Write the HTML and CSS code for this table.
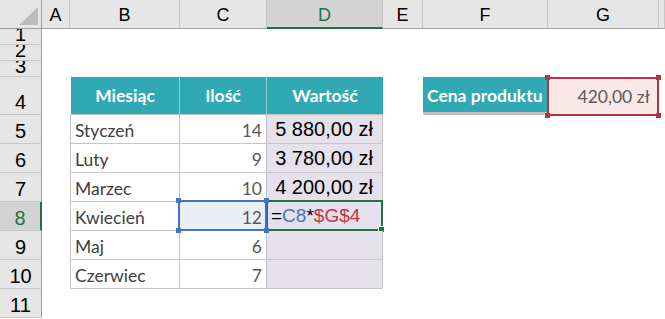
FILE: index.html
```html
<!DOCTYPE html>
<html lang="pl">
<head>
    <meta charset="UTF-8">
    <meta name="viewport" content="width=device-width, initial-scale=1.0">
    <title>Arkusz - Cena produktu</title>
    <link rel="stylesheet" href="styles.css">
</head>
<body>
    <div class="sheet">
        <!-- nagłówki kolumn -->
        <div class="row head">
            <div class="corner"></div>
            <div class="col">A</div>
            <div class="col">B</div>
            <div class="col">C</div>
            <div class="col active">D</div>
            <div class="col">E</div>
            <div class="col">F</div>
            <div class="col">G</div>
            <div class="col"></div>
        </div>

        <div class="row thin">
            <div class="num">1</div>
            <div class="cell"></div><div class="cell"></div><div class="cell"></div><div class="cell"></div>
            <div class="cell"></div><div class="cell"></div><div class="cell"></div><div class="cell"></div>
        </div>
        <div class="row thin">
            <div class="num">2</div>
            <div class="cell"></div><div class="cell"></div><div class="cell"></div><div class="cell"></div>
            <div class="cell"></div><div class="cell"></div><div class="cell"></div><div class="cell"></div>
        </div>
        <div class="row thin">
            <div class="num">3</div>
            <div class="cell"></div><div class="cell"></div><div class="cell"></div><div class="cell"></div>
            <div class="cell"></div><div class="cell"></div><div class="cell"></div><div class="cell"></div>
        </div>

        <!-- nagłówek tabeli i cena -->
        <div class="row tall">
            <div class="num">4</div>
            <div class="cell"></div>
            <div class="cell th first">Miesiąc</div>
            <div class="cell th">Ilość</div>
            <div class="cell th last">Wartość</div>
            <div class="cell"></div>
            <div class="cell label">Cena produktu</div>
            <div class="cell price">420,00 zł</div>
            <div class="cell"></div>
        </div>

        <div class="row">
            <div class="num">5</div>
            <div class="cell"></div>
            <div class="cell td month">Styczeń</div>
            <div class="cell td qty">14</div>
            <div class="cell td value">5 880,00 zł</div>
            <div class="cell"></div><div class="cell"></div><div class="cell"></div><div class="cell"></div>
        </div>
        <div class="row">
            <div class="num">6</div>
            <div class="cell"></div>
            <div class="cell td month">Luty</div>
            <div class="cell td qty">9</div>
            <div class="cell td value">3 780,00 zł</div>
            <div class="cell"></div><div class="cell"></div><div class="cell"></div><div class="cell"></div>
        </div>
        <div class="row">
            <div class="num">7</div>
            <div class="cell"></div>
            <div class="cell td month">Marzec</div>
            <div class="cell td qty">10</div>
            <div class="cell td value">4 200,00 zł</div>
            <div class="cell"></div><div class="cell"></div><div class="cell"></div><div class="cell"></div>
        </div>
        <div class="row">
            <div class="num active">8</div>
            <div class="cell"></div>
            <div class="cell td month">Kwiecień</div>
            <div class="cell td qty ref">12</div>
            <div class="cell td value edit"><span class="op">=</span><span class="r-blue">C8</span><span class="op">*</span><span class="r-red">$G$4</span></div>
            <div class="cell"></div><div class="cell"></div><div class="cell"></div><div class="cell"></div>
        </div>
        <div class="row">
            <div class="num">9</div>
            <div class="cell"></div>
            <div class="cell td month">Maj</div>
            <div class="cell td qty">6</div>
            <div class="cell td value"></div>
            <div class="cell"></div><div class="cell"></div><div class="cell"></div><div class="cell"></div>
        </div>
        <div class="row">
            <div class="num">10</div>
            <div class="cell"></div>
            <div class="cell td month">Czerwiec</div>
            <div class="cell td qty">7</div>
            <div class="cell td value"></div>
            <div class="cell"></div><div class="cell"></div><div class="cell"></div><div class="cell"></div>
        </div>
        <div class="row">
            <div class="num">11</div>
            <div class="cell"></div><div class="cell"></div><div class="cell"></div><div class="cell"></div>
            <div class="cell"></div><div class="cell"></div><div class="cell"></div><div class="cell"></div>
        </div>
    </div>
</body>
</html>
```

FILE: styles.css
```css
* {
    box-sizing: border-box;
}

body {
    margin: 0;
    padding: 0;
    background: #fff;
    overflow: hidden;
    font-family: "Liberation Sans", Arial, sans-serif;
}

.sheet {
    width: 665px;
    height: 319px;
    overflow: hidden;
}

.row {
    display: grid;
    grid-template-columns: 42px 28px 110px 87px 116px 40px 125px 111px 1fr;
    height: 29px;
}

.row.thin {
    height: 16px;
}

.row.tall {
    height: 38px;
}

.cell {
    position: relative;
    display: flex;
    align-items: flex-end;
    padding-bottom: 2px;
    white-space: nowrap;
}

/* nagłówki kolumn */
.head .col,
.corner {
    display: flex;
    align-items: center;
    justify-content: center;
    padding-top: 3px;
    background: #e6e6e6;
    border-right: 1px solid #c6c6c6;
    border-bottom: 1px solid #9f9f9f;
    font-size: 18px;
    color: #000;
}

.head .col.active {
    background: #d3d3d3;
    color: #217346;
    border-bottom: 2px solid #217346;
}

.corner {
    position: relative;
    border-right-color: #9f9f9f;
}

.corner::after {
    content: "";
    position: absolute;
    right: 3px;
    bottom: 3px;
    width: 19px;
    height: 18px;
    background: #bdbdbd;
    clip-path: polygon(100% 0, 100% 100%, 0 100%);
}

/* numery wierszy */
.num {
    display: flex;
    align-items: flex-end;
    justify-content: center;
    padding-bottom: 2px;
    overflow: hidden;
    background: #e6e6e6;
    border-right: 1px solid #9f9f9f;
    border-bottom: 1px solid #c6c6c6;
    font-size: 20px;
    line-height: 20px;
    color: #000;
}

.thin .num {
    padding-bottom: 0;
}

.num.active {
    background: #d3d3d3;
    color: #217346;
    border-right: 2px solid #217346;
}

/* tabela */
.th {
    align-items: center;
    justify-content: center;
    padding-bottom: 0;
    background: #30a9b5;
    color: #fff;
    font-family: Lato, "Open Sans", sans-serif;
    font-weight: 700;
    font-size: 17.5px;
    border-right: 1px solid #8fd0d6;
    border-bottom: 1px solid #bfbfbf;
}

.th.first {
    border-left: 1px solid #fff;
}

.th.last {
    border-right: none;
}

.td {
    border-right: 1px solid #c6c6c6;
    border-bottom: 1px solid #c6c6c6;
    font-family: Lato, "Open Sans", sans-serif;
    font-size: 17.5px;
}

.month {
    border-left: 1px solid #c6c6c6;
    padding-left: 4px;
    color: #404040;
}

.qty {
    justify-content: flex-end;
    padding-right: 4px;
    color: #595959;
}

.value {
    justify-content: flex-end;
    padding-right: 9px;
    padding-bottom: 2px;
    background: #e5e1ec;
    font-family: "Liberation Sans", Arial, sans-serif;
    font-size: 20px;
    color: #000;
}

/* komórka w trybie edycji */
.value.edit {
    justify-content: flex-start;
    padding-left: 4px;
    padding-bottom: 3px;
    font-size: 19px;
}

.op {
    color: #000;
}

.r-blue {
    color: #4472c4;
}

.r-red {
    color: #c8323f;
}

.edit::before {
    content: "";
    position: absolute;
    inset: -2px -1px -1px -1px;
    border: 2px solid #217346;
}

.edit::after {
    content: "";
    position: absolute;
    right: -3px;
    bottom: -3px;
    width: 5px;
    height: 5px;
    background: #217346;
    border: 1px solid #fff;
}

/* odwołanie do C8 */
.ref {
    z-index: 2;
    background: #e9eef8;
}

.ref::before {
    content: "";
    position: absolute;
    inset: -2px -1px -1px -2px;
    border: 2px solid #4472c4;
}

.ref::after {
    content: "";
    position: absolute;
    inset: -4px -3px -3px -4px;
    background:
        linear-gradient(#4472c4, #4472c4) left top / 5px 5px no-repeat,
        linear-gradient(#4472c4, #4472c4) right top / 5px 5px no-repeat,
        linear-gradient(#4472c4, #4472c4) left bottom / 5px 5px no-repeat,
        linear-gradient(#4472c4, #4472c4) right bottom / 5px 5px no-repeat;
}

/* cena produktu */
.label {
    align-items: center;
    padding: 2px 0 0 4px;
    background: #30a9b5;
    color: #fff;
    font-family: Lato, "Open Sans", sans-serif;
    font-weight: 700;
    font-size: 17.5px;
    border-bottom: 3px solid #c8bebe;
    margin-right: 1px;
}

.price {
    z-index: 2;
    align-items: center;
    justify-content: flex-end;
    padding: 0 9px 0 0;
    background: #fbe8e9;
    color: #595959;
    font-family: Lato, "Open Sans", sans-serif;
    font-size: 17.5px;
}

.price::before {
    content: "";
    position: absolute;
    inset: 0 0 -1px -1px;
    border: 2px solid #b5333f;
}

.price::after {
    content: "";
    position: absolute;
    inset: -2px -2px -3px -3px;
    background:
        linear-gradient(#b5333f, #b5333f) left top / 5px 5px no-repeat,
        linear-gradient(#b5333f, #b5333f) right top / 5px 5px no-repeat,
        linear-gradient(#b5333f, #b5333f) left bottom / 5px 5px no-repeat,
        linear-gradient(#b5333f, #b5333f) right bottom / 5px 5px no-repeat;
}
```
